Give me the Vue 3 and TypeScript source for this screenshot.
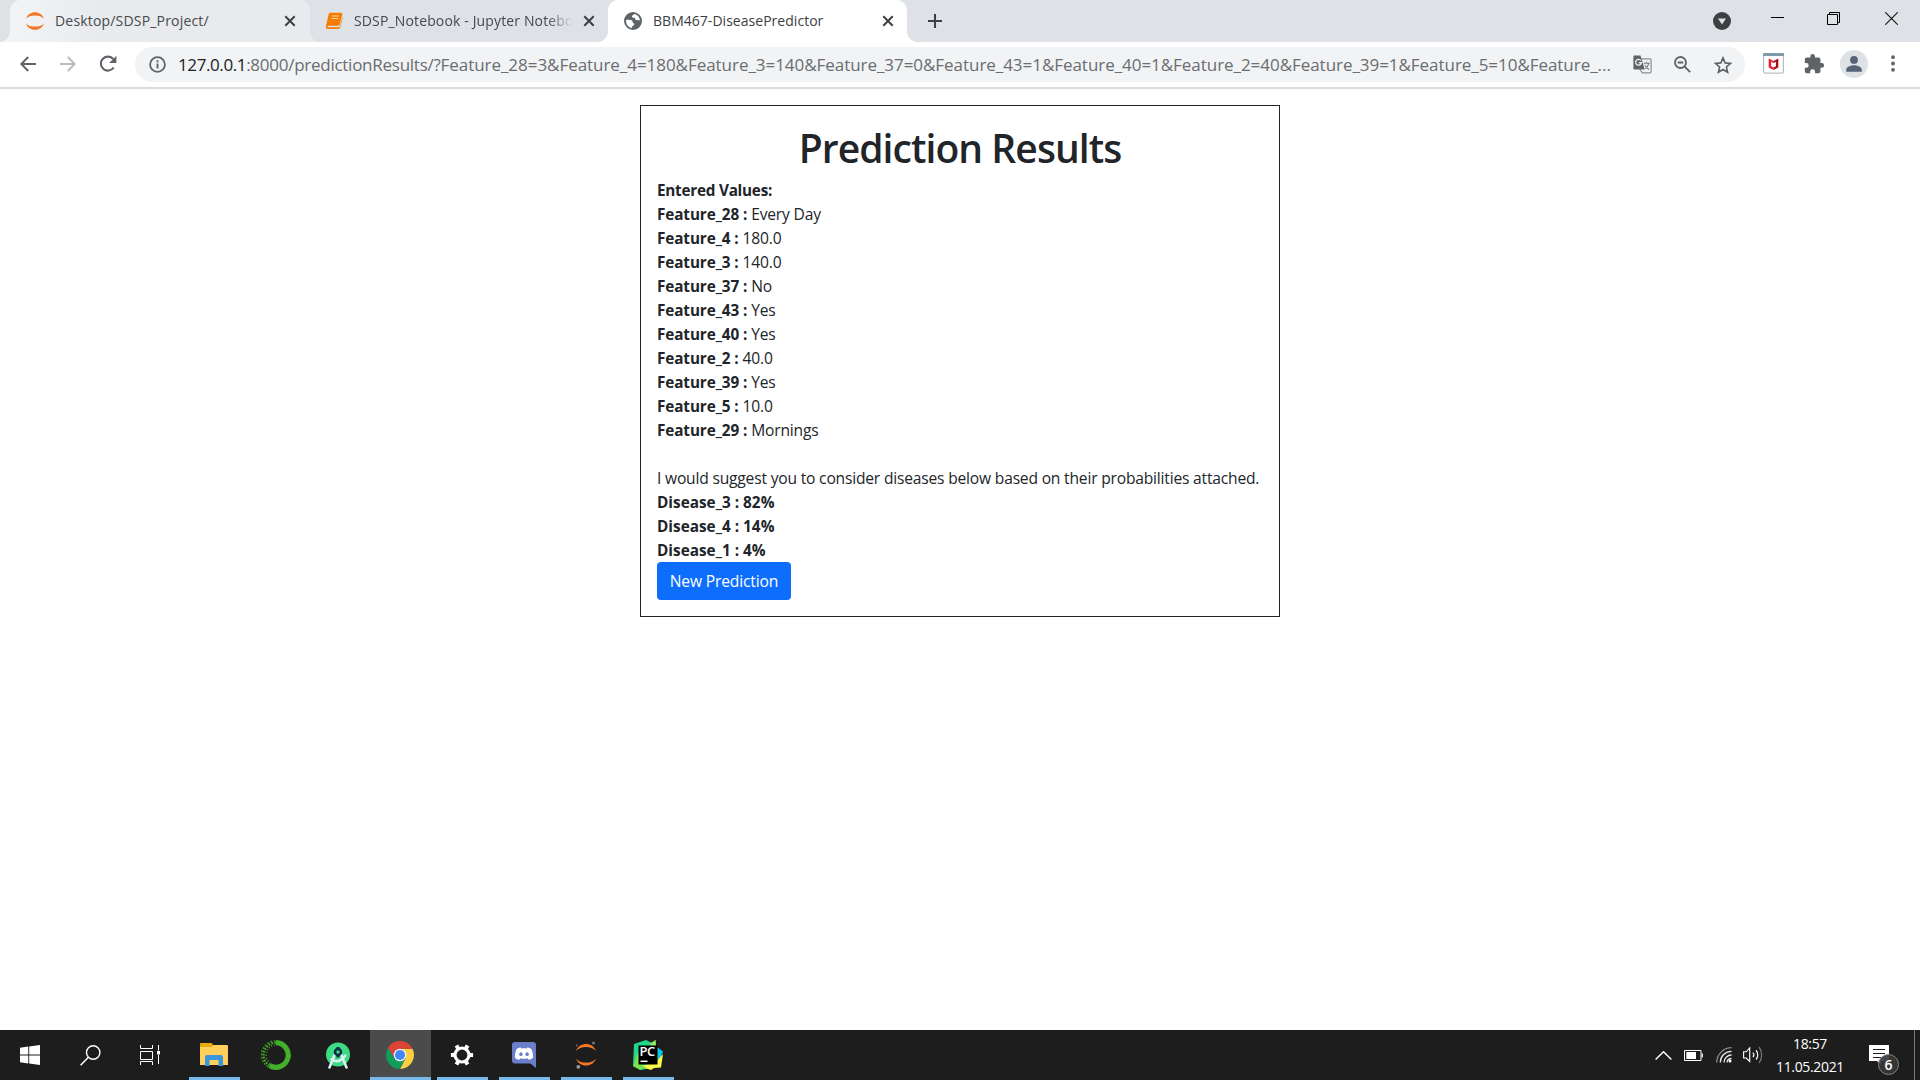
<script setup lang="ts">
interface Field {
  name: string
  value: string
}

const fields: Field[] = [
  { name: 'Feature_28', value: 'Every Day' },
  { name: 'Feature_4', value: '180.0' },
  { name: 'Feature_3', value: '140.0' },
  { name: 'Feature_37', value: 'No' },
  { name: 'Feature_43', value: 'Yes' },
  { name: 'Feature_40', value: 'Yes' },
  { name: 'Feature_2', value: '40.0' },
  { name: 'Feature_39', value: 'Yes' },
  { name: 'Feature_5', value: '10.0' },
  { name: 'Feature_29', value: 'Mornings' },
]

const diseases: Field[] = [
  { name: 'Disease_3', value: '82%' },
  { name: 'Disease_4', value: '14%' },
  { name: 'Disease_1', value: '4%' },
]

const host = '127.0.0.1'
const path = ':8000/predictionResults/?'
const query =
  'Feature_28=3&Feature_4=180&Feature_3=140&Feature_37=0&Feature_43=1&Feature_40=1&Feature_2=40&Feature_39=1&Feature_5=10&Feature_...'
</script>

<template>
  <div class="desktop">
    <header class="tabstrip">
      <div class="tab tab-hover">
        <svg class="favicon" width="20" height="20" viewBox="0 0 20 20">
          <path d="M1 7.600C2.400 3.600 6 1.300 10 1.300s7.600 2.300 9 6.300C16.800 5.500 13.600 4.400 10 4.400S3.200 5.500 1 7.600z" fill="#f37726" />
          <path d="M1 12.400c1.400 4 5 6.300 9 6.300s7.600-2.300 9-6.300c-2.200 2.100-5.400 3.200-9 3.200s-6.800-1.100-9-3.200z" fill="#f37726" />
        </svg>
        <span class="tab-title wide">Desktop/SDSP_Project/</span>
        <svg class="close" width="12" height="12" viewBox="0 0 12 12"><path d="M1.300 1.300l9.400 9.400M10.700 1.300L1.300 10.700" /></svg>
      </div>
      <div class="tab tab-plain">
        <svg class="favicon" width="18" height="18" viewBox="0 0 18 18">
          <path d="M5.300.800h10.900c1 0 1.300.600 1.100 1.400l-2.700 10.400c-.2.800-.9 1.200-1.700 1.200H3.200c-1 0-1 1.500 0 1.500h10.300c.7 0 1-.3 1.200-.9L17.400 4.500c.4.500.4 1 .2 1.600l-2.500 9.500c-.2.800-.9 1.400-1.700 1.400H2.900C1.400 17 .500 15.700.900 14.200L3.600 2.600C3.900 1.500 4.400.8 5.300.8z" fill="#f57c00" />
          <path d="M6.900 4h7M6.300 6.500h7" stroke="#fbd5ae" stroke-width="1" />
        </svg>
        <span class="tab-title fade">SDSP_Notebook - Jupyter Notebo</span>
        <svg class="close" width="12" height="12" viewBox="0 0 12 12"><path d="M1.300 1.300l9.400 9.400M10.700 1.300L1.300 10.700" /></svg>
      </div>
      <div class="tab tab-active">
        <svg class="favicon" width="18" height="18" viewBox="0 0 18 18">
          <circle cx="9" cy="9" r="9" fill="#5f6368" />
          <path d="M10.400 2.100C9.800 3.100 8.200 3.200 8 4.500c-.1 1 .9 1.300 2 1.300 1 0 1.300.6 1.300 1.400 0 .7.6.9 1.300.8 1-.2 1.800.2 3.300.3-.3-2.900-2.400-5.500-5.500-6.200zM2.100 7.900C3.600 7.800 5.100 8 6.500 8.100c1.200.1 2.100.7 2.100 1.800 0 1 .9 1.100 1.400 1.600.6.700.2 1.500-.7 1.900-.9.400-1.400 1.200-1.500 2.500-3.600-.6-6.100-4-5.700-8z" fill="#fff" />
        </svg>
        <span class="tab-title">BBM467-DiseasePredictor</span>
        <svg class="close" width="12" height="12" viewBox="0 0 12 12"><path d="M1.300 1.300l9.400 9.400M10.700 1.300L1.300 10.700" /></svg>
      </div>
      <svg class="plus" width="16" height="16" viewBox="0 0 16 16"><path d="M8 1v14M1 8h14" stroke="#3c4043" stroke-width="2.100" /></svg>
      <div class="window-controls">
        <svg width="18" height="18" viewBox="0 0 18 18"><circle cx="9" cy="9" r="9" fill="#3c4043" /><path d="M5 6.500h8L9 12.500z" fill="#dee1e6" /></svg>
        <svg class="minimize" width="13" height="13" viewBox="0 0 13 13"><path d="M0 6.500h13" stroke="#000" /></svg>
        <svg class="restore" width="13" height="13" viewBox="0 0 13 13"><path d="M.5 2.500h10v10H.5zM2.500 2.500v-2h10v10h-2" fill="none" stroke="#000" /></svg>
        <svg class="quit" width="13" height="13" viewBox="0 0 13 13"><path d="M.3.300l12.400 12.400M12.700.300L.3 12.700" stroke="#111" stroke-width="1.100" /></svg>
      </div>
    </header>

    <nav class="toolbar">
      <svg class="nav-back" width="16" height="16" viewBox="0 0 16 16"><path d="M16 8H1.500M8.200 1L1.300 8l6.900 7" fill="none" stroke="#5f6368" stroke-width="2" /></svg>
      <svg class="nav-forward" width="16" height="16" viewBox="0 0 16 16"><path d="M0 8h14.500M7.800 1l6.900 7-6.900 7" fill="none" stroke="#babcbe" stroke-width="2" /></svg>
      <svg class="nav-reload" width="18" height="18" viewBox="0 0 18 18">
        <path d="M14.700 12.500A7 7 0 1 1 14.300 4.200" fill="none" stroke="#5f6368" stroke-width="2.100" />
        <path d="M17.400.800v7.200h-7.200z" fill="#5f6368" />
      </svg>
      <div class="omnibox">
        <svg class="info" width="17" height="17" viewBox="0 0 17 17">
          <circle cx="8.500" cy="8.500" r="7.400" fill="none" stroke="#5f6368" stroke-width="1.800" />
          <path d="M8.500 7.500v5M8.500 4.300v1.900" stroke="#5f6368" stroke-width="1.900" />
        </svg>
        <span class="url"><span class="host">{{ host }}</span><span class="path">{{ path }}</span><span>{{ query }}</span></span>
        <svg class="translate" width="19" height="19" viewBox="0 0 19 19">
          <path d="M8 3.800h9c.6 0 1.100.5 1.100 1.100v11.900c0 .6-.5 1.100-1.100 1.100H9.400L6.800 14.500" fill="#f1f3f4" stroke="#8a8d91" stroke-width="1.200" />
          <path d="M1.400.400h6.100l4.200 14.100H1.400C.8 14.500.4 14 .4 13.500V1.400c0-.6.400-1 1-1z" fill="#5f6368" />
          <path d="M7.900 5.600A2.900 2.900 0 1 0 8.400 7.700H5.700" fill="none" stroke="#f1f3f4" stroke-width="1.300" />
          <path d="M10.600 8.200h6.200M13.500 6.700v1.500M15.700 8.300c-.4 2.400-1.900 4.400-3.600 5.600M11.800 9.900c.8 1.900 2.300 3.500 4.300 4.500" fill="none" stroke="#777a7e" stroke-width="1.100" />
        </svg>
        <svg class="zoom" width="17" height="17" viewBox="0 0 17 17"><circle cx="6.500" cy="6.500" r="5.500" fill="none" stroke="#5f6368" stroke-width="1.800" /><path d="M10.600 10.600l5.600 5.600M3.700 6.500h5.600" stroke="#5f6368" stroke-width="1.900" /></svg>
        <svg class="star" width="18" height="18" viewBox="0 0 18 18"><path d="M9 1.900l2.100 5 5.400.500-4.100 3.600 1.200 5.300L9 13.500l-4.600 2.800 1.200-5.300-4.100-3.600 5.400-.5z" fill="none" stroke="#5f6368" stroke-width="1.600" /></svg>
      </div>
      <svg class="shield" width="21" height="21" viewBox="0 0 21 21">
        <rect x=".6" y=".6" width="19.800" height="19.600" rx="1.500" fill="#fff" stroke="#b9bdc2" stroke-width="1.200" />
        <path d="M0 3V1.300C0 .5.500 0 1.300 0h18.400c.8 0 1.300.5 1.300 1.300V3z" fill="#7f9aa8" />
        <path d="M5.700 5.500l2.400 1.200v6.600l2.400 1.100v2.500l-4.800-2.300z" fill="#ef1a2d" />
        <path d="M8.100 6.700l2.400 1.400v2L8.100 9z" fill="#ef1a2d" />
        <path d="M15.300 5.500l-2.400 1.200v6.600l-2.400 1.100v2.500l4.800-2.300z" fill="#a50d1b" />
        <path d="M12.900 6.700l-2.400 1.400v2L12.900 9z" fill="#a50d1b" />
      </svg>
      <svg class="puzzle" width="22" height="22" viewBox="0 0 24 24"><path d="M20.500 11H19V7c0-1.100-.9-2-2-2h-4V3.500a2.500 2.500 0 0 0-5 0V5H4c-1.100 0-2 .9-2 2v3.800h1.500a2.700 2.700 0 0 1 0 5.400H2V20c0 1.100.9 2 2 2h3.800v-1.500a2.700 2.700 0 0 1 5.400 0V22H17c1.100 0 2-.9 2-2v-4h1.500a2.500 2.500 0 0 0 0-5z" fill="#5f6368" /></svg>
      <svg class="avatar" width="28" height="28" viewBox="0 0 28 28">
        <circle cx="14" cy="14" r="14" fill="#dee1e6" />
        <circle cx="14" cy="9.900" r="3.900" fill="#556377" />
        <path d="M6.200 21.700v-1.900c0-3 4.400-4.500 7.800-4.500s7.800 1.500 7.800 4.500v1.900z" fill="#556377" />
      </svg>
      <svg class="menu" width="4" height="17" viewBox="0 0 4 17"><circle cx="2" cy="2.200" r="1.900" fill="#5f6368" /><circle cx="2" cy="8.500" r="1.900" fill="#5f6368" /><circle cx="2" cy="14.800" r="1.900" fill="#5f6368" /></svg>
    </nav>

    <main class="content">
      <section class="card">
        <h1>Prediction Results</h1>
        <p class="line heading"><b>Entered Values:</b></p>
        <p v-for="f in fields" :key="f.name" class="line"><b>{{ f.name }} :</b> {{ f.value }}</p>
        <p class="line suggestion">I would suggest you to consider diseases below based on their probabilities attached.</p>
        <p v-for="d in diseases" :key="d.name" class="line"><b class="disease">{{ d.name }} : {{ d.value }}</b></p>
        <button class="button" type="button">New Prediction</button>
      </section>
    </main>

    <footer class="taskbar">
      <div class="system-cell">
        <svg width="20" height="20" viewBox="0 0 20 20"><path d="M0 2.700l8.300-1.200V9.400H0zM9.200 1.400L20 0v9.400H9.200zM0 10.400h8.300v8L0 17.300zM9.200 10.400H20V20L9.200 18.500z" fill="#fff" /></svg>
      </div>
      <div class="system-cell">
        <svg width="21" height="21" viewBox="0 0 21 21"><circle cx="13.200" cy="7.500" r="6.700" fill="none" stroke="#fff" stroke-width="1.400" /><path d="M8.400 12.300L.6 20.300" stroke="#fff" stroke-width="1.500" /></svg>
      </div>
      <div class="system-cell">
        <svg width="20" height="20" viewBox="0 0 20 20">
          <path d="M.5 6.500h12v8H.5zM.5 0v3.500h12V0M.5 20v-3.500h12V20M18.500 0v5.500M18.500 10v9" fill="none" stroke="#fff" />
          <rect x="17" y="6" width="3" height="3.500" fill="#fff" />
        </svg>
      </div>
      <div class="apps">
        <div class="app open">
          <svg width="28" height="24" viewBox="0 0 28 24">
            <path d="M0 1.200C0 .5.500 0 1.200 0h10.400l1.600 2h12.700c1.100 0 1.900.7 1.900 1.700V22H0z" fill="#e8a90b" />
            <path d="M0 4h11.800l2-2H27c.5 0 .9.300.9.900V22H0z" fill="#ffd15c" />
            <path d="M5 23V14c0-1.100.9-2 2-2h14c1.100 0 2 .9 2 2v9h-4.500v-6h-9v6z" fill="#3a96dd" />
          </svg>
        </div>
        <div class="app">
          <svg width="30" height="30" viewBox="0 0 30 30">
            <path d="M15 2.700A12.300 12.300 0 1 1 8.500 25.500" fill="none" stroke="#43b02a" stroke-width="5.200" />
            <path d="M8.500 25.500A12.300 12.300 0 0 1 15 2.700" fill="none" stroke="#43b02a" stroke-width="2" stroke-dasharray="1.700 1.300" />
            <path d="M7 26.800A14 14 0 0 1 15 1" fill="none" stroke="#369323" stroke-width="1.600" stroke-dasharray="1.900 1.500" />
            <path d="M9.500 23.500A10.400 10.400 0 0 1 15 4.600" fill="none" stroke="#369323" stroke-width="1.500" stroke-dasharray="1.300 1.600" />
          </svg>
        </div>
        <div class="app">
          <svg width="26" height="27" viewBox="0 0 26 27">
            <circle cx="13" cy="12.500" r="12" fill="#3ddc84" />
            <path d="M9.800 12.500L4.500 25.500M16.200 12.500l5.300 13" stroke="#dff1f4" stroke-width="2.500" stroke-linecap="round" />
            <path d="M6.500 17.200c4 3.400 9.500 2.700 13.700-3.600" fill="none" stroke="#dff1f4" stroke-width="2.400" stroke-linecap="round" />
            <circle cx="13" cy="10" r="3" fill="none" stroke="#073042" stroke-width="2.600" />
            <path d="M13 5v2M13 13v2.500" stroke="#073042" stroke-width="3" />
          </svg>
        </div>
        <div class="app active">
          <svg width="28" height="28" viewBox="0 0 28 28">
            <path d="M14 7.700h12.500A14 14 0 0 1 14 28l5.500-10.800z" fill="#ffcd42" />
            <path d="M8.500 17.200L1.900 7A14 14 0 0 1 26.400 7.700H14z" fill="#dc4437" />
            <path d="M8.500 17.200L1.900 7A14 14 0 0 0 13.600 28l5.900-10.800L14 20z" fill="#109d59" />
            <circle cx="14" cy="14" r="6.300" fill="#f1f1f1" />
            <circle cx="14" cy="14" r="5" fill="#4285f4" />
          </svg>
        </div>
        <div class="app open">
          <svg width="24" height="24" viewBox="0 0 24 24">
            <circle cx="12" cy="12" r="7" fill="none" stroke="#fff" stroke-width="3.200" />
            <path d="M19.500 12h3.600M.9 12h3.600M15.800 5.500l1.800-3.100M8.200 18.500l-1.800 3.100M8.200 5.500L6.400 2.400M15.800 18.500l1.800 3.100" stroke="#fff" stroke-width="4" />
          </svg>
        </div>
        <div class="app open">
          <svg width="24" height="26" viewBox="0 0 24 26">
            <path d="M2.800 0h18.400C22.700 0 24 1.200 24 2.800V26l-5.500-4.500H2.800C1.200 21.500 0 20.300 0 18.700V2.800C0 1.200 1.200 0 2.800 0z" fill="#6a7fc8" />
            <path d="M8.700 5.500c-1.800.3-3 .8-4 1.600C3.300 9.800 2.800 12.700 3 15.700c1.200 1.300 2.700 1.900 4.300 2l1-1.400c2.400.7 5 .7 7.400 0l1 1.400c1.600-.1 3.100-.7 4.300-2 .2-3-.3-5.900-1.700-8.600-1-.8-2.200-1.300-4-1.600l-.6 1c-1.800-.3-3.600-.3-5.400 0z" fill="#fff" />
            <ellipse cx="8.900" cy="12.200" rx="1.700" ry="1.900" fill="#6a7fc8" /><ellipse cx="15.100" cy="12.200" rx="1.700" ry="1.900" fill="#6a7fc8" />
          </svg>
        </div>
        <div class="app open">
          <svg width="22" height="28" viewBox="0 0 22 28">
            <path d="M1 9.800C2.600 5.600 6.500 3 11 3s8.400 2.600 10 6.800c-2.400-2.600-6-3.900-10-3.900S3.400 7.200 1 9.800z" fill="#f37726" />
            <path d="M1 17.700c1.600 4.200 5.500 6.800 10 6.800s8.400-2.600 10-6.800c-2.400 2.600-6 3.900-10 3.900S3.400 20.300 1 17.700z" fill="#f37726" />
            <circle cx="18.500" cy="2" r="1.600" fill="#6f7072" /><circle cx="3.300" cy="25.800" r="1.900" fill="#9e9e9e" /><circle cx="1.700" cy="4.400" r="1" fill="#6f7072" />
          </svg>
        </div>
        <div class="app open">
          <svg width="30" height="30" viewBox="0 0 30 30">
            <path d="M1 4l12-4 6 3 3.500-3 .5 6 5 7-3 14-17 3L0 26z" fill="#21d789" />
            <path d="M17 3.500L22.500 0l.5 8-3 5z" fill="#9be85c" />
            <path d="M24 7l6 4.500-4 10z" fill="#07c3f2" />
            <path d="M6 26l16-3 8-9-2 13.500-7 .5-3 2z" fill="#fcf84a" />
            <path d="M0 26l5-14 3 13 5 2-6 3z" fill="#7fe04f" />
            <rect x="5.500" y="5.500" width="19" height="19" fill="#000" />
            <text x="6.500" y="16.300" class="pycharm-label">PC</text>
            <path d="M7.500 21.300h7" stroke="#fff" stroke-width="1.500" />
          </svg>
        </div>
      </div>
      <div class="tray">
        <svg class="chevron" width="17" height="9" viewBox="0 0 17 9"><path d="M.6 8.400l7.900-7.700 7.900 7.700" fill="none" stroke="#fff" stroke-width="1.400" /></svg>
        <svg class="battery" width="19" height="11" viewBox="0 0 19 11"><path d="M.5.500h16.500v10H.5z" fill="none" stroke="#fff" /><rect x="2.300" y="2" width="9.700" height="7" fill="#fff" /><path d="M18.200 3.500v4" stroke="#fff" stroke-width="1.300" /></svg>
        <svg class="wifi" width="16" height="16" viewBox="0 0 16 16">
          <g fill="none" stroke-width="1.300">
            <path d="M.7 15.500A15 15 0 0 1 15.500.700" stroke="#8c8c8c" />
            <path d="M4.300 15.500A11.200 11.200 0 0 1 15.500 4.300M8 15.500A7.500 7.500 0 0 1 15.500 8" stroke="#e8e8e8" />
            <path d="M11 15.500a4.500 4.500 0 0 1 4.500-4" stroke="#e8e8e8" />
          </g>
          <circle cx="14" cy="14" r="1.500" fill="#fff" />
        </svg>
        <svg class="speaker" width="20" height="18" viewBox="0 0 20 18">
          <path d="M.6 5.800h2.600L6.700 2v13.500L3.200 12H.6z" fill="none" stroke="#fff" stroke-width="1.100" />
          <path d="M10 6.700c1 1.300 1 3.200 0 4.500M13 4.300c2.300 2.600 2.300 6.700 0 9.300" fill="none" stroke="#eee" stroke-width="1.300" />
          <path d="M16 1c3.500 4.300 3.500 11.600 0 16" fill="none" stroke="#777" stroke-width="1.200" />
        </svg>
        <div class="clock"><span>18:57</span><span>11.05.2021</span></div>
        <div class="notifications">
          <svg width="20" height="20" viewBox="0 0 20 20"><path d="M0 0h20v16h-8v4l-4-4H0z" fill="#fff" /><path d="M4 4.500h12M4 8.500h12M4 12.500h8" stroke="#1d1d1d" /></svg>
          <span class="badge">6</span>
        </div>
        <div class="peek"></div>
      </div>
    </footer>
  </div>
</template>

<style>
body { background: #fff; overflow: hidden; }
</style>

<style scoped>
.desktop {
  display: flex;
  flex-direction: column;
  width: 1920px;
  height: 1080px;
  background: #fff;
  color: #212529;
  font-family: "Open Sans", "Noto Sans", sans-serif;
}
svg { display: block; flex: none; }

.tabstrip {
  display: flex;
  height: 42px;
  padding-left: 10px;
  background: #dee1e6;
}
.tab {
  position: relative;
  display: flex;
  align-items: center;
  box-sizing: border-box;
  height: 42px;
  border-radius: 10px 10px 0 0;
  color: #45494d;
  font-size: 14px;
}
.tab-hover { width: 300px; padding: 0 14px 0 15px; background: linear-gradient(90deg, #f3f4f5, #e8eaed 30%); }
.tab-plain { width: 298px; padding: 0 13px 0 15px; }
.tab-active { width: 299px; padding: 0 13px 0 16px; background: #fff; color: #3c4043; }
.tab-hover::before,
.tab-hover::after,
.tab-active::before,
.tab-active::after {
  content: "";
  position: absolute;
  bottom: 0;
  width: 10px;
  height: 10px;
}
.tab-hover::before { left: -10px; background: radial-gradient(circle at 0 0, transparent 9.5px, #f3f4f5 10px); }
.tab-hover::after { right: -10px; background: radial-gradient(circle at 100% 0, transparent 9.5px, #e8eaed 10px); }
.tab-active::before { left: -10px; background: radial-gradient(circle at 0 0, transparent 9.5px, #fff 10px); }
.tab-active::after { right: -10px; background: radial-gradient(circle at 100% 0, transparent 9.5px, #fff 10px); }
.tab-title { flex: 1; margin-left: 11px; white-space: nowrap; line-height: 20px; letter-spacing: 0.03px; }
.tab-hover .tab-title { margin-left: 10px; }
.tab-title.wide { letter-spacing: 0.18px; }
.tab-title.fade {
  flex: none;
  width: 219px;
  margin-right: 10px;
  letter-spacing: 0.14px;
  -webkit-mask-image: linear-gradient(90deg, #000 88%, transparent);
  mask-image: linear-gradient(90deg, #000 88%, transparent);
}
.close { fill: none; stroke: #3c4043; stroke-width: 2; }
.plus { margin: 13px 0 0 20px; }
.window-controls { display: flex; align-items: flex-start; margin: 12px 22px 0 auto; }
.minimize { margin: -1px 0 0 40px; }
.restore { margin-left: 43px; }
.quit { margin-left: 45px; }

.toolbar {
  display: flex;
  align-items: center;
  box-sizing: border-box;
  height: 47px;
  padding: 0 25px 2px 20px;
  border-bottom: 2px solid #dadce0;
}
.nav-forward { margin-left: 24px; }
.nav-reload { margin-left: 23px; }
.omnibox {
  display: flex;
  align-items: center;
  box-sizing: border-box;
  width: 1610px;
  height: 35px;
  margin: 2px 0 0 18px;
  padding: 0 13px 0 14px;
  border-radius: 18px;
  background: #f1f3f4;
}
.url { flex: none; width: 1454px; margin-left: 12px; color: #6a6d71; font-size: 17px; line-height: 24px; letter-spacing: -0.045px; white-space: nowrap; }
.host { color: #202124; letter-spacing: -0.4px; }
.path { letter-spacing: -0.26px; }
.translate { margin-left: 1px; }
.zoom { margin-left: 22px; }
.star { margin-left: 23px; }
.shield { margin-left: 18px; }
.puzzle { margin-left: 19px; }
.avatar { margin-left: 15px; }
.menu { margin-left: 23px; }

.content { flex: 1; display: flex; justify-content: center; align-items: flex-start; padding-top: 16px; }
.card {
  box-sizing: border-box;
  width: 640px;
  height: 512px;
  padding: 16px;
  border: 1px solid #212529;
  font-size: 15.6px;
}
h1 { margin: 0; padding: 2px 0 6px; font-size: 39px; font-weight: 600; line-height: 48px; letter-spacing: -0.92px; text-align: center; }
.line { margin: 0; line-height: 24px; letter-spacing: -0.17px; white-space: nowrap; }
.line b { font-size: 15.3px; font-weight: 700; letter-spacing: -0.1px; }
.line.heading b { letter-spacing: -0.25px; }
.line .disease { letter-spacing: 0.02px; }
.suggestion { margin-top: 24px; letter-spacing: -0.19px; }
.button {
  display: block;
  width: 134px;
  height: 38px;
  padding: 0;
  border: 0;
  border-radius: 4px;
  background: #0d6efd;
  color: #fff;
  font: inherit;
  line-height: 38px;
  letter-spacing: -0.15px;
}

.taskbar { display: flex; height: 50px; background: #1d1d1d; color: #fff; }
.system-cell { display: flex; align-items: center; justify-content: center; width: 60px; }
.apps { display: flex; gap: 1px; margin-left: 4px; }
.app {
  position: relative;
  display: flex;
  align-items: center;
  justify-content: center;
  box-sizing: border-box;
  width: 61px;
  height: 50px;
  padding-right: 2px;
}
.app.active { background: #4b4b4b; }
.app.open::after,
.app.active::after { content: ""; position: absolute; left: 5px; right: 5px; bottom: 0; height: 3px; background: #76b9ed; }
.app.active::after { left: 0; right: 0; }
.pycharm-label { fill: #fff; font-size: 13px; font-weight: 600; letter-spacing: -0.4px; }
.tray { display: flex; align-items: center; margin-left: auto; }
.battery { margin-left: 12px; }
.wifi { margin-left: 13px; }
.speaker { margin-left: 11px; }
.clock { display: flex; flex-direction: column; align-items: center; width: 70px; margin-left: 12px; font-size: 14px; line-height: 23px; letter-spacing: -0.35px; }
.notifications { position: relative; width: 20px; height: 20px; margin-left: 24px; }
.badge {
  position: absolute;
  left: 9px;
  top: 9px;
  box-sizing: border-box;
  width: 21px;
  height: 21px;
  border: 1px solid #858585;
  border-radius: 50%;
  background: rgba(55, 55, 55, 0.92);
  font-size: 14px;
  font-weight: 600;
  line-height: 19px;
  text-align: center;
}
.peek { width: 5px; height: 50px; margin-left: 25px; border-left: 1px solid #777; }
</style>
